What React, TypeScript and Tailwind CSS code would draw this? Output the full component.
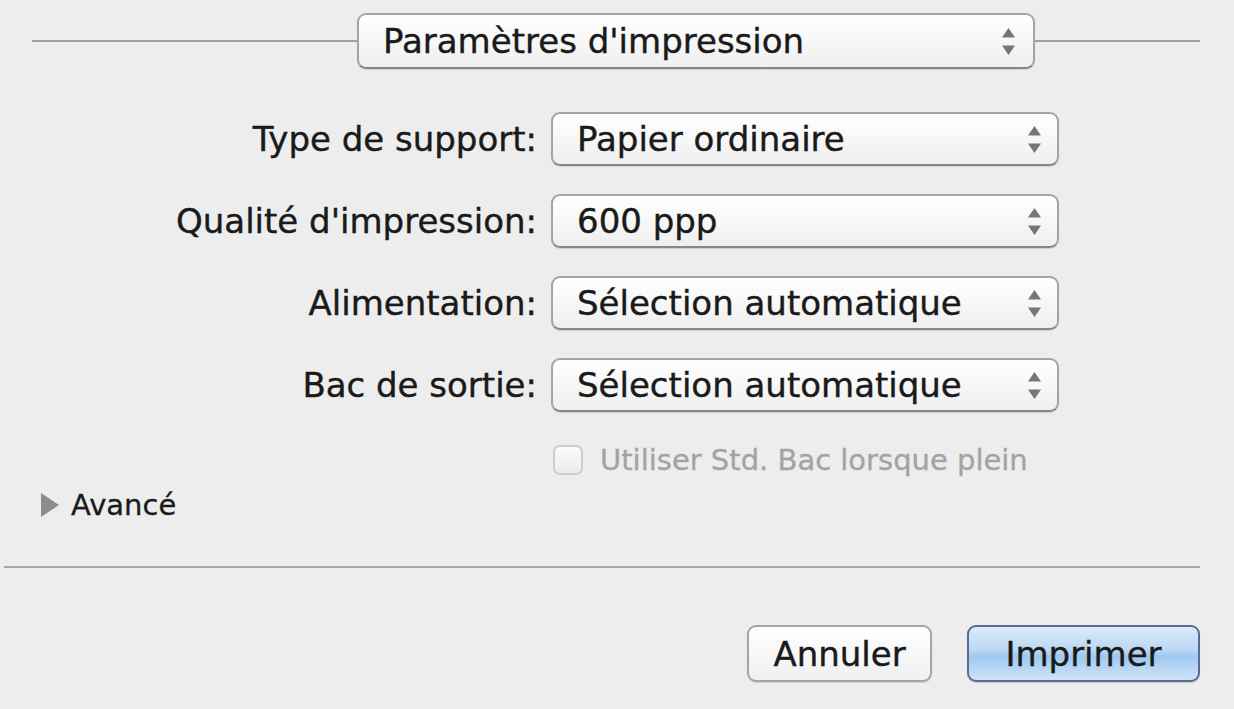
type PopupProps = {
  value: string;
  className: string;
  arrowPad?: string;
};

// petites flèches haut/bas du menu local
function Arrows() {
  return (
    <svg width="13" height="27" viewBox="0 0 13 27" className="shrink-0">
      <polygon points="6.5,0 13,9.5 0,9.5" fill="#767676" />
      <polygon points="0,17.5 13,17.5 6.5,27" fill="#767676" />
    </svg>
  );
}

function Popup({ value, className, arrowPad = "pr-[16px]" }: PopupProps) {
  return (
    <div
      className={`flex items-center justify-between rounded-[9px] border-2 border-[#a4a4a4] border-b-[#888888] bg-linear-to-b from-white to-[#efefef] pl-[24px] shadow-[0_1px_1px_rgba(0,0,0,0.12)] ${arrowPad} ${className}`}
    >
      <span className="text-[34px] leading-none whitespace-nowrap [-webkit-text-stroke:0.4px_#1a1a1a]">{value}</span>
      <Arrows />
    </div>
  );
}

const rows = [
  { label: "Type de support:", value: "Papier ordinaire" },
  { label: "Qualité d'impression:", value: "600 ppp" },
  { label: "Alimentation:", value: "Sélection automatique" },
  { label: "Bac de sortie:", value: "Sélection automatique" },
];

export default function App() {
  return (
    <div className="flex min-h-screen w-full flex-col bg-[#ededed] font-['DejaVu_Sans',sans-serif] text-[#1a1a1a]">
      {/* en-tête avec le menu de panneau */}
      <div className="flex items-center pt-[13px]">
        <div className="ml-[32px] h-[2px] w-[325px] bg-[#a0a0a0]" />
        <Popup value="Paramètres d'impression" className="h-[56px] w-[678px]" arrowPad="pr-[18px]" />
        <div className="h-[2px] w-[165px] bg-[#a0a0a0]" />
      </div>

      {/* réglages */}
      <div className="mt-[43px] flex flex-col gap-[28px]">
        {rows.map((r) => (
          <div key={r.label} className="flex items-center">
            <div className="w-[537px] text-right text-[34px] leading-none whitespace-nowrap [-webkit-text-stroke:0.4px_#1a1a1a]">
              {r.label}
            </div>
            <Popup value={r.value} className="ml-[14px] h-[54px] w-[508px]" />
          </div>
        ))}
      </div>

      <div className="mt-[33px] flex h-[30px] items-center pl-[553px]">
        <div className="h-[30px] w-[30px] rounded-[7px] border-2 border-[#cdcdcd] bg-linear-to-b from-[#fbfbfb] to-[#ebebeb]" />
        <span className="ml-[17px] text-[29px] leading-none text-[#a3a3a3] whitespace-nowrap [-webkit-text-stroke:0.3px_#a3a3a3]">
          Utiliser Std. Bac lorsque plein
        </span>
      </div>

      <div className="mt-[18px] flex h-[24px] items-center pl-[41px]">
        <svg width="18" height="24" viewBox="0 0 18 24" className="shrink-0">
          <polygon points="0,0 18,12 0,24" fill="#8c8c8c" />
        </svg>
        <span className="ml-[12px] text-[29px] leading-none [-webkit-text-stroke:0.3px_#1a1a1a]">Avancé</span>
      </div>

      <div className="mt-[49px] ml-[4px] h-[2px] w-[1196px] bg-[#a6a6a6]" />

      {/* boutons */}
      <div className="mt-[57px] flex justify-end gap-[35px] pr-[34px]">
        <button className="h-[57px] w-[185px] rounded-[9px] border-2 border-[#a4a4a4] bg-linear-to-b from-white to-[#f0f0f0] text-[34px] leading-none text-[#1a1a1a] shadow-[0_1px_1px_rgba(0,0,0,0.12)] [-webkit-text-stroke:0.4px_#1a1a1a]">
          Annuler
        </button>
        <button className="h-[57px] w-[233px] rounded-[9px] border-2 border-[#5b6a90] bg-[linear-gradient(to_bottom,#dcebfb_0%,#b9d6f4_45%,#a0c7ee_55%,#cde5fb_100%)] text-[34px] leading-none text-[#1a1a1a] shadow-[0_1px_1px_rgba(0,0,0,0.15)] [-webkit-text-stroke:0.4px_#1a1a1a]">
          Imprimer
        </button>
      </div>
    </div>
  );
}
